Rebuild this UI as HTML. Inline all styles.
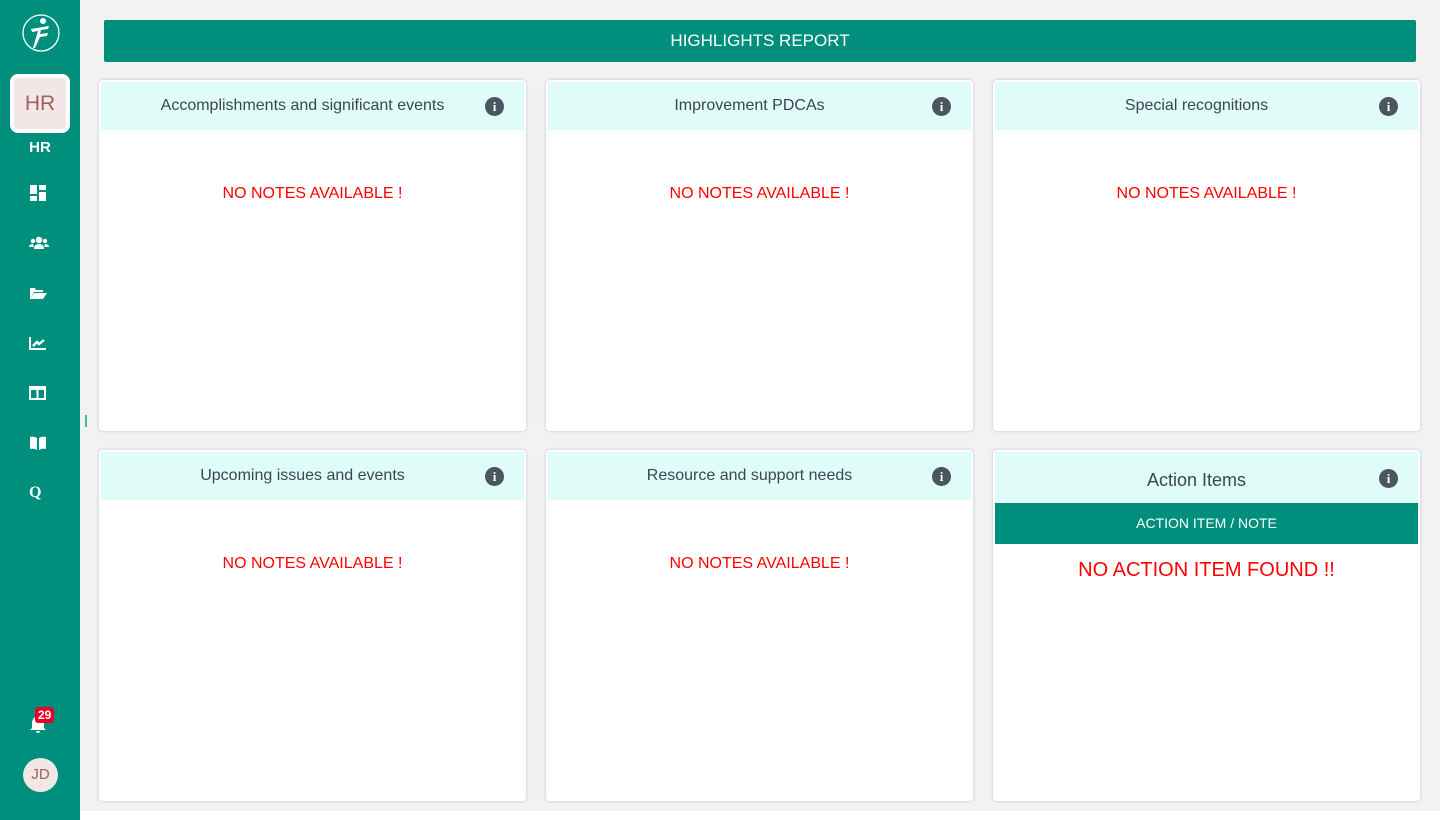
<!DOCTYPE html>
<html><head><meta charset="utf-8"><style>
*{box-sizing:border-box;margin:0;padding:0}
body{width:1440px;height:820px;background:#f2f2f2;font-family:"Liberation Sans",Arial,sans-serif;position:relative;overflow:hidden}
.side{position:absolute;left:0;top:0;width:80px;height:820px;background:#008f7c}
.bottomw{position:absolute;left:80px;top:811px;width:1360px;height:9px;background:#fff}
.hdr{position:absolute;left:104px;top:20px;width:1312px;height:42px;background:#008f7c;color:#fff;font-size:17px;text-align:center;line-height:42px;border-radius:2px}
.card{position:absolute;width:427px;height:351px;background:#fff;border-radius:4px;box-shadow:0 0 3px rgba(0,0,0,.2);padding:2px}
.ch{height:48px;background:#dffcf8;color:#3d4650;font-size:16px;text-align:center;line-height:48px;position:relative;padding-right:20px}
.info{position:absolute;right:20px;top:15px;width:19px;height:19px;border-radius:50%;background:#4a5560;color:#fff;font:bold 13px "Liberation Serif",serif;line-height:19px;text-align:center}
.nn{color:#f00;font-size:16px;text-align:center;margin-top:55px}
.icon{position:absolute;left:29px;width:18px;height:16px}
</style></head><body>
<div class="side">
<svg style="position:absolute;left:21px;top:12px" width="40" height="42" viewBox="0 0 40 42"><circle cx="20" cy="21" r="18" fill="none" stroke="#fff" stroke-width="1.3"/><circle cx="22" cy="9" r="3" fill="#fff"/><path d="M10 17 L28 14 L27 17 L20 18 L19 22 L27 21 L26 24 L19 25 L14 36 L12 36 L17 19 L11 20Z" fill="#fff"/></svg>
<div style="position:absolute;left:10px;top:74px;width:60px;height:59px;background:#fff;border-radius:8px;padding:4px"><div style="width:52px;height:51px;background:#f3e6e6;border-radius:4px;color:#a06060;font-size:21px;text-align:center;line-height:51px">HR</div></div>
<div style="position:absolute;left:0;top:139px;width:80px;text-align:center;color:#fff;font-size:15px;font-weight:bold">HR</div>
<svg class="icon" style="top:185px" viewBox="0 0 18 16"><rect x="1" y="0" width="7" height="9" fill="#fff"/><rect x="10" y="0" width="7" height="5" fill="#fff"/><rect x="1" y="11" width="7" height="5" fill="#fff"/><rect x="10" y="7" width="7" height="9" fill="#fff"/></svg>
<svg class="icon" style="top:235px;width:20px;left:29px" viewBox="0 0 20 16"><circle cx="10" cy="5" r="3.2" fill="#fff"/><circle cx="4" cy="6" r="2.2" fill="#fff"/><circle cx="16" cy="6" r="2.2" fill="#fff"/><path d="M5 14 Q5 9 10 9 Q15 9 15 14Z M0 12 Q0 9 4 9 L5 12Z M20 12 Q20 9 16 9 L15 12Z" fill="#fff"/></svg>
<svg class="icon" style="top:285px" viewBox="0 0 18 16"><path d="M1 3 L6 3 L7 5 L14 5 L14 7 L5 7 L1 14Z M5 8 L18 8 L14 14 L1 14Z" fill="#fff"/></svg>
<svg class="icon" style="top:335px" viewBox="0 0 18 16"><path d="M1 2 V14 H17" stroke="#fff" stroke-width="2" fill="none"/><path d="M4 11 L8 7 L10 9 L15 5" stroke="#fff" stroke-width="2.4" fill="none"/></svg>
<svg class="icon" style="top:385px" viewBox="0 0 18 16"><rect x="1" y="2" width="15" height="12" stroke="#fff" stroke-width="2" fill="none"/><path d="M1 4 H16 M8.5 3 V14" stroke="#fff" stroke-width="2"/></svg>
<svg class="icon" style="top:435px" viewBox="0 0 18 16"><path d="M1 2 Q5 1 8 3 V15 Q5 13 1 14Z M17 2 Q13 1 10 3 V15 Q13 13 17 14Z" fill="#fff"/></svg>
<div style="position:absolute;left:29px;top:484px;color:#fff;font:bold 16px 'Liberation Serif',serif">Q</div>
<svg style="position:absolute;left:29px;top:714px" width="18" height="20" viewBox="0 0 18 20"><path d="M9 2 Q3 3 3 10 V14 L1 16 H17 L15 14 V10 Q15 3 9 2Z M7 17 H11 Q11 19 9 19 Q7 19 7 17Z" fill="#fff"/></svg>
<div style="position:absolute;left:35px;top:707px;background:#e8002a;color:#fff;font:bold 12px 'Liberation Sans',sans-serif;padding:1px 3px;border-radius:3px;line-height:14px">29</div>
<div style="position:absolute;left:23px;top:758px;width:35px;height:34px;border-radius:50%;background:#f3e6e6;color:#a06060;font-size:15px;text-align:center;line-height:34px">JD</div>
</div>
<div style="position:absolute;left:85px;top:415px;width:2px;height:12px;background:#3cc39e"></div>
<div class="bottomw"></div>
<div class="hdr">HIGHLIGHTS REPORT</div>

<div class="card" style="left:99px;top:80px"><div class="ch">Accomplishments and significant events<div class="info">i</div></div><div class="nn">NO NOTES AVAILABLE !</div></div>
<div class="card" style="left:546px;top:80px"><div class="ch">Improvement PDCAs<div class="info">i</div></div><div class="nn">NO NOTES AVAILABLE !</div></div>
<div class="card" style="left:993px;top:80px"><div class="ch">Special recognitions<div class="info">i</div></div><div class="nn">NO NOTES AVAILABLE !</div></div>
<div class="card" style="left:99px;top:450px"><div class="ch">Upcoming issues and events<div class="info">i</div></div><div class="nn">NO NOTES AVAILABLE !</div></div>
<div class="card" style="left:546px;top:450px"><div class="ch">Resource and support needs<div class="info">i</div></div><div class="nn">NO NOTES AVAILABLE !</div></div>
<div class="card" style="left:993px;top:450px"><div class="ch" style="height:51px;line-height:56px;font-size:18px">Action Items<div class="info" style="top:17px">i</div></div>
<div style="height:41px;background:#008f7c;color:#fff;font-size:14px;text-align:center;line-height:41px">ACTION ITEM / NOTE</div>
<div style="color:#f00;font-size:20px;text-align:center;margin-top:15px">NO ACTION ITEM FOUND !!</div></div>
</body></html>
